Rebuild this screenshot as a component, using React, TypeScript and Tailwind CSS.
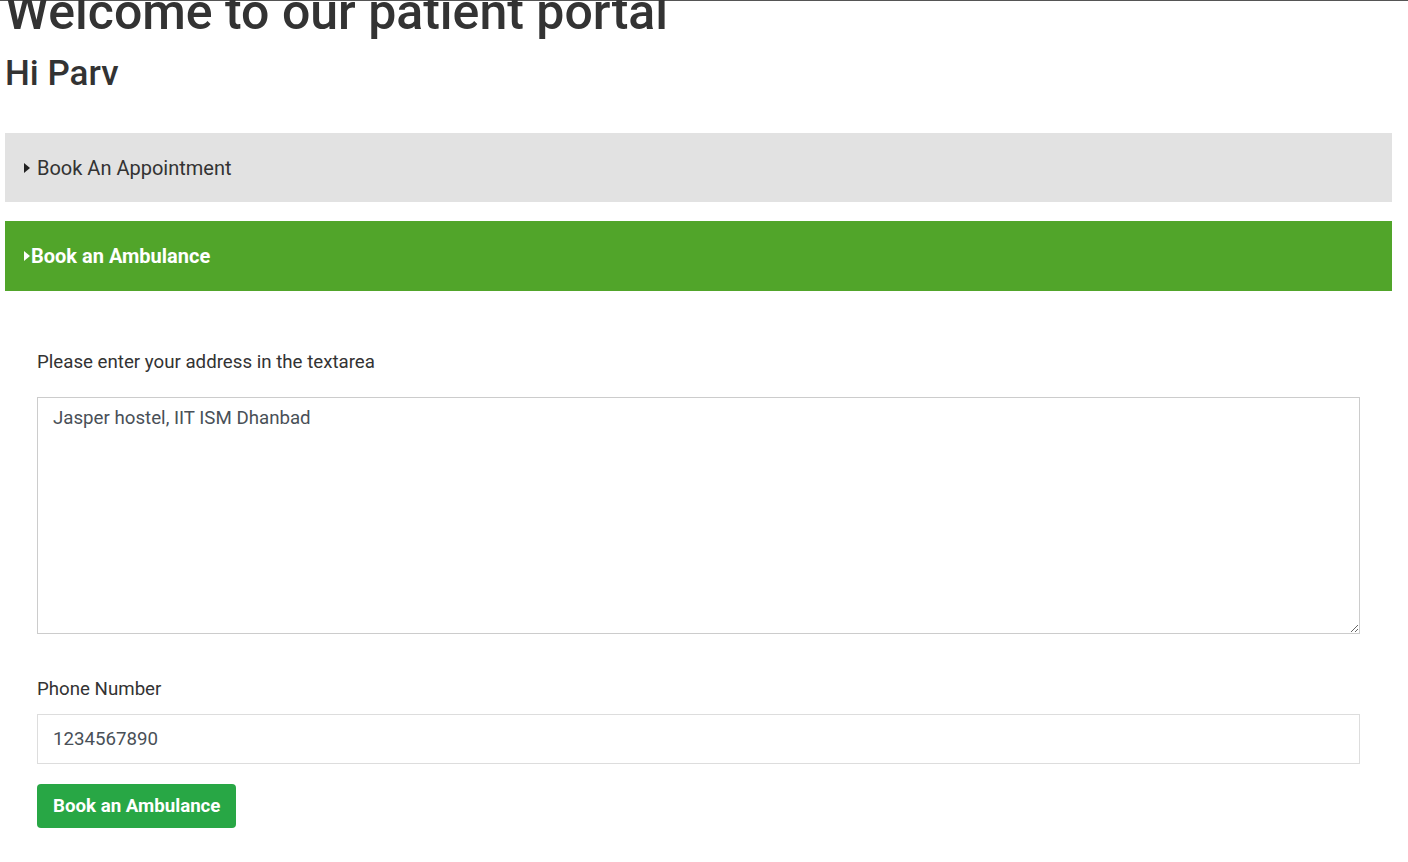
import React from "react";

export default function App() {
  return (
    <div className="min-h-[862px] bg-white text-[#333] overflow-hidden" style={{ fontFamily: "Roboto, 'Liberation Sans', sans-serif" }}>
      <div className="h-px bg-[#555]" />
      <div className="pl-[5px] pr-[16px]">
        <h1 className="mt-[-17px] text-[50px] leading-[56px] font-medium text-[#333] whitespace-nowrap">Welcome to our patient portal</h1>
        <h2 className="mt-[14px] text-[35px] leading-[40px] font-medium text-[#333]">Hi Parv</h2>
        <div className="mt-[39px] h-[69px] bg-[#e2e2e2] flex items-center pl-[19px]">
          <span className="w-0 h-0 border-y-[5.5px] border-y-transparent border-l-[6px] border-l-[#222] mr-[7px]" />
          <span className="text-[20px] font-normal text-[#333]">Book An Appointment</span>
        </div>
        <div className="mt-[19px] h-[70px] bg-[#51a52a] flex items-center pl-[19px]">
          <span className="w-0 h-0 border-y-[5px] border-y-transparent border-l-[6px] border-l-white mr-[1px]" />
          <span className="text-[20px] font-bold text-white">Book an Ambulance</span>
        </div>
        <div className="px-[32px]">
          <label className="block mt-[58px] text-[18.7px] leading-[27px] text-[#333]">Please enter your address in the textarea</label>
          <textarea
            className="block mt-[21px] w-full h-[237px] border border-[#ccc] px-[15px] py-[7px] text-[18.7px] leading-[27px] text-[#495057] outline-none"
            defaultValue="Jasper hostel, IIT ISM Dhanbad"
            style={{ fontFamily: "Roboto, 'Liberation Sans', sans-serif" }}
          />
          <label className="block mt-[42px] text-[18.7px] leading-[27px] text-[#333]">Phone Number</label>
          <input
            className="block mt-[11px] w-full h-[50px] border border-[#ddd] px-[15px] text-[18.7px] text-[#495057] outline-none"
            defaultValue="1234567890"
            style={{ fontFamily: "Roboto, 'Liberation Sans', sans-serif" }}
          />
          <button className="mt-[20px] h-[44px] px-[16px] rounded-[4px] bg-[#28a745] text-white text-[18.7px] font-bold">Book an Ambulance</button>
        </div>
      </div>
    </div>
  );
}
